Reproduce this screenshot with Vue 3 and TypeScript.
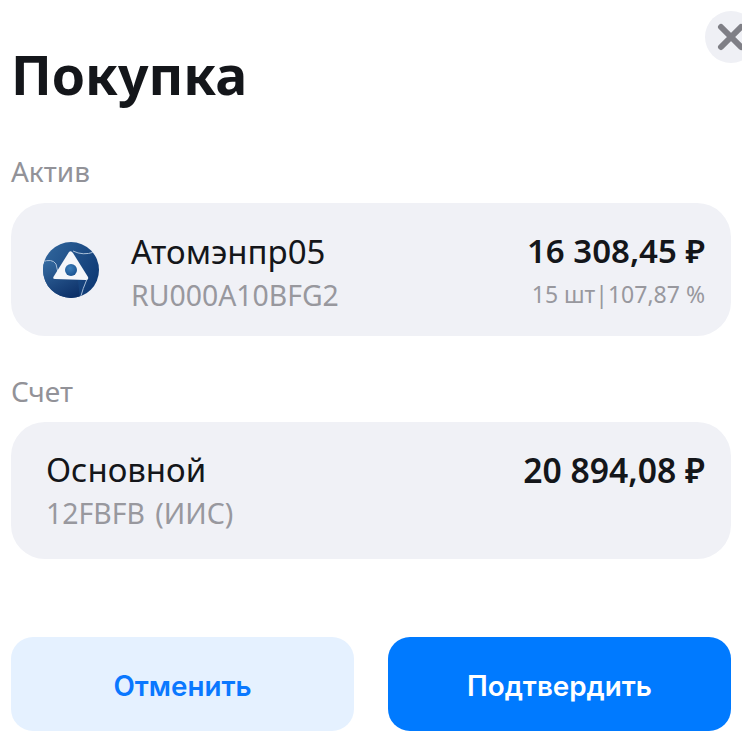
<template>
  <div class="modal">
    <button class="close" aria-label="Закрыть">
      <svg width="30" height="30" viewBox="0 0 30 30">
        <path d="M5 5 L25 25 M25 5 L5 25" stroke="#7f7f86" stroke-width="6" stroke-linecap="round" />
      </svg>
    </button>
    <h1 class="title">Покупка</h1>

    <div class="label">Актив</div>
    <div class="card asset">
      <svg class="logo" width="58" height="58" viewBox="0 0 58 58">
        <defs>
          <clipPath id="logoClip">
            <circle cx="29" cy="29" r="28" />
          </clipPath>
          <linearGradient id="bladeTop" x1="0" y1="0" x2="1" y2="0.6">
            <stop offset="0" stop-color="#33699f" />
            <stop offset="1" stop-color="#0f3a75" />
          </linearGradient>
          <linearGradient id="bladeLeft" x1="0.2" y1="0" x2="0.7" y2="1">
            <stop offset="0" stop-color="#34699f" />
            <stop offset="1" stop-color="#0d3169" />
          </linearGradient>
          <radialGradient id="logoDot" cx="0.4" cy="0.35" r="0.8">
            <stop offset="0" stop-color="#3d7fbb" />
            <stop offset="1" stop-color="#124a8a" />
          </radialGradient>
        </defs>
        <g clip-path="url(#logoClip)">
          <rect width="58" height="58" fill="url(#bladeTop)" />
          <path d="M0 21 Q10 17 14 23 L17 38 L36 39 L38 58 L0 58 Z" fill="url(#bladeLeft)" />
          <!-- seams between the three blades -->
          <path d="M31 10 Q41 15 52 11" stroke="#a9bfd8" stroke-width="1" fill="none" />
          <path d="M0 21 Q10 17 14 23 L17 36" stroke="#a9bfd8" stroke-width="1" fill="none" />
          <path d="M45 38 Q41 47 38 58" stroke="#a9bfd8" stroke-width="1" fill="none" />
        </g>
        <path d="M27 11 Q29 9 31 12 L46 36 Q47 39 44 39 L13 38 Q10 38 12 35 Z" fill="#f4f6fa" />
        <circle cx="29" cy="29" r="6" fill="url(#logoDot)" />
      </svg>
      <div class="info">
        <div class="name">Атомэнпр05</div>
        <div class="sub">RU000A10BFG2</div>
      </div>
      <div class="amounts">
        <div class="amount">16 308,45 ₽</div>
        <div class="meta">15 шт|107,87 %</div>
      </div>
    </div>

    <div class="label account-label">Счет</div>
    <div class="card account">
      <div class="info">
        <div class="name">Основной</div>
        <div class="sub account-sub">12FBFB (ИИС)</div>
      </div>
      <div class="amount">20 894,08 ₽</div>
    </div>

    <div class="actions">
      <button class="btn cancel">Отменить</button>
      <button class="btn confirm">Подтвердить</button>
    </div>
  </div>
</template>

<script setup lang="ts">
</script>

<style scoped>
.modal {
  position: relative;
  box-sizing: border-box;
  width: 742px;
  height: 742px;
  overflow: hidden;
  padding: 40px 11px 0;
  background: #fff;
  font-family: "Noto Sans", "Open Sans", sans-serif;
  color: #14161a;
}

.close {
  position: absolute;
  top: 11px;
  left: 705px;
  width: 52px;
  height: 52px;
  padding: 0;
  border: 0;
  border-radius: 50%;
  background: #eff0f5;
  display: flex;
  align-items: center;
  justify-content: center;
}

.title {
  margin: 0;
  font-size: 53.5px;
  line-height: 70px;
  font-weight: 700;
}

.label {
  margin-top: 43px;
  font-size: 28px;
  line-height: 36px;
  color: #929298;
}

.account-label {
  margin-top: 37px;
}

.card {
  display: flex;
  align-items: center;
  justify-content: space-between;
  background: #f0f1f6;
  border-radius: 34px;
}

.asset {
  margin-top: 14px;
  height: 133px;
  padding: 0 26px 0 31px;
}

.account {
  margin-top: 13px;
  height: 137px;
  padding: 0 26px 0 35px;
  align-items: flex-start;
}

.logo {
  flex: none;
  margin-right: 31px;
}

.asset .info {
  flex: 1;
  margin-top: 6px;
}

.asset .amounts {
  margin-top: 4px;
  text-align: right;
}

.account .info {
  padding-top: 28px;
}

.account .amount {
  padding-top: 28px;
  font-size: 33.7px;
}

.name {
  font-size: 33px;
  line-height: 40px;
}

.sub {
  margin-top: 4px;
  font-size: 28.4px;
  line-height: 38px;
  color: #98989e;
}

.account-sub {
  word-spacing: 3px;
}

.amount {
  font-size: 33px;
  line-height: 40px;
  font-weight: 600;
}

.meta {
  margin-top: 5px;
  font-size: 23px;
  line-height: 36px;
  color: #98989e;
}

.actions {
  display: flex;
  gap: 34px;
  margin-top: 78px;
  width: 720px;
}

.btn {
  flex: 1;
  height: 94px;
  padding: 4px 0 0;
  border: 0;
  border-radius: 22px;
  font-family: "Inter", "Noto Sans", sans-serif;
  font-size: 27.8px;
  font-weight: 600;
}

.cancel {
  background: #e5f1ff;
  color: #0a78ff;
}

.confirm {
  background: #007aff;
  color: #fff;
}
</style>
